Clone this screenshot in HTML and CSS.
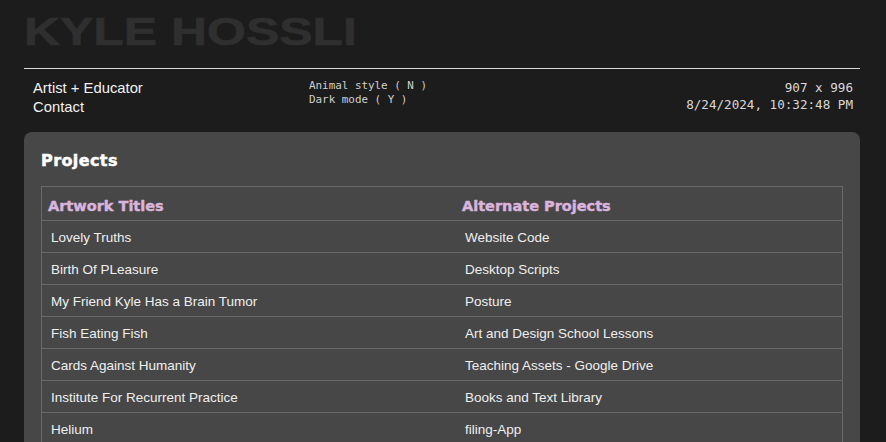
FILE: index.html
```html
<!DOCTYPE html>
<html lang="en">
<head>
<meta charset="utf-8">
<title>Kyle Hossli</title>
<link rel="stylesheet" href="styles.css">
</head>
<body>
<header class="masthead">
  <h1 class="site-title">KYLE HOSSLI</h1>
</header>
<section class="info">
  <nav class="nav">
    <a href="#">Artist + Educator</a>
    <a href="#">Contact</a>
  </nav>
  <div class="toggles">
    <div>Animal style ( N )</div>
    <div>Dark mode ( Y )</div>
  </div>
  <div class="meta">
    <div>907 x 996</div>
    <div>8/24/2024, 10:32:48 PM</div>
  </div>
</section>
<main class="card">
  <h2 class="card-title">Projects</h2>
  <table class="projects">
    <thead>
      <tr><th class="col-a">Artwork Titles</th><th>Alternate Projects</th></tr>
    </thead>
    <tbody>
      <tr><td>Lovely Truths</td><td>Website Code</td></tr>
      <tr><td>Birth Of PLeasure</td><td>Desktop Scripts</td></tr>
      <tr><td>My Friend Kyle Has a Brain Tumor</td><td>Posture</td></tr>
      <tr><td>Fish Eating Fish</td><td>Art and Design School Lessons</td></tr>
      <tr><td>Cards Against Humanity</td><td>Teaching Assets - Google Drive</td></tr>
      <tr><td>Institute For Recurrent Practice</td><td>Books and Text Library</td></tr>
      <tr><td>Helium</td><td>filing-App</td></tr>
    </tbody>
  </table>
</main>
</body>
</html>
```
FILE: styles.css
```css
html, body {
  margin: 0;
  padding: 0;
  background: #1c1c1c;
}
body {
  padding: 0 26px 0 24px;
  font-family: "Liberation Sans", Arial, sans-serif;
  color: #efefef;
  overflow: hidden;
  height: 442px;
  box-sizing: border-box;
}
.masthead {
  padding-top: 12px;
  padding-bottom: 17px;
  border-bottom: 1px solid #d8d8d8;
}
.site-title {
  margin: 0;
  font-family: "Liberation Sans", Arial, sans-serif;
  font-weight: 700;
  font-size: 39px;
  line-height: 39px;
  color: #2f2f2f;
  -webkit-text-stroke: 0.6px #2f2f2f;
  transform: scaleX(1.28);
  transform-origin: left center;
  white-space: nowrap;
}
.info {
  display: grid;
  grid-template-columns: 276px 1fr auto;
  padding: 10px 7px 0 9px;
  height: 53px;
}
.nav {
  display: flex;
  flex-direction: column;
  font-size: 14.8px;
  line-height: 19px;
}
.nav a {
  color: #f2f2f2;
  text-decoration: none;
}
.toggles {
  font-family: "DejaVu Sans Mono", monospace;
  font-size: 10.9px;
  line-height: 14px;
  color: #cfcfcf;
}
.meta {
  font-family: "DejaVu Sans Mono", monospace;
  font-size: 12.6px;
  line-height: 17px;
  color: #d8d8d8;
  text-align: right;
}
.card {
  background: #474747;
  border-radius: 8px;
  padding: 19px 17px 20px;
}
.card-title {
  margin: 0 0 15px;
  font-family: "DejaVu Sans", sans-serif;
  font-weight: 700;
  font-size: 16px;
  line-height: 20px;
  letter-spacing: 0.4px;
  color: #ffffff;
  -webkit-text-stroke: 0.5px #ffffff;
}
.projects {
  width: 100%;
  border-collapse: collapse;
  border: 1px solid #696969;
}
.projects th {
  text-align: left;
  font-family: "DejaVu Sans", sans-serif;
  font-weight: 700;
  font-size: 14.5px;
  color: #d9b4de;
  -webkit-text-stroke: 0.45px #d9b4de;
  height: 29px;
  padding: 4px 6px 0;
  border-bottom: 1px solid #696969;
}
.projects .col-a {
  width: 402px;
}
.projects td {
  font-size: 13.5px;
  color: #efefef;
  height: 29px;
  padding: 2px 9px 0;
  border-bottom: 1px solid #696969;
}
```
